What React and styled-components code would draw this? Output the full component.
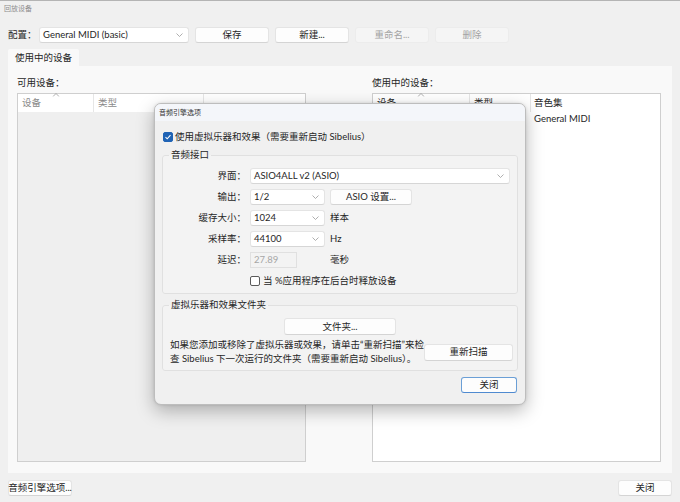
import React from "react"
import styled, { createGlobalStyle } from "styled-components"

const GlobalStyle = createGlobalStyle`
	html, body {
		margin: 0;
		padding: 0;
		background: #f0f0f0;
	}
	body {
		font-family: "Lato", "Noto Sans CJK SC", sans-serif;
		font-size: 9.5px;
		line-height: 12px;
		color: #262626;
	}
	* {
		box-sizing: border-box;
	}
`

function Chevron({ up }) {
	return (
		<svg width="7" height="4" viewBox="0 0 7 4">
			<path
				d={up ? "M0.5 3.5 L3.5 0.5 L6.5 3.5" : "M0.5 0.5 L3.5 3.5 L6.5 0.5"}
				fill="none"
				stroke="#9a9a9a"
				strokeWidth="0.8"
			/>
		</svg>
	)
}

function Select({ width, value }) {
	return (
		<SelectBox $width={width}>
			<span>{value}</span>
			<Chevron />
		</SelectBox>
	)
}

function Check({ checked }) {
	return (
		<CheckBox $checked={checked}>
			{checked && (
				<svg width="8" height="8" viewBox="0 0 8 8">
					<path d="M1.5 4.2 L3.2 5.8 L6.5 2.2" fill="none" stroke="#fff" strokeWidth="1.1" />
				</svg>
			)}
		</CheckBox>
	)
}

function App() {
	return (
		<>
			<GlobalStyle />
			<Window>
				<WindowTitle>回放设备</WindowTitle>
				<Toolbar>
					<FieldLabel>配置：</FieldLabel>
					<Select width={150} value="General MIDI (basic)" />
					<Button $width={74} $gap={6}>保存</Button>
					<Button $width={74} $gap={6}>新建...</Button>
					<Button $width={74} $gap={6} $disabled>重命名...</Button>
					<Button $width={74} $gap={6} $disabled>删除</Button>
				</Toolbar>

				<TabStrip>
					<Tab>使用中的设备</Tab>
				</TabStrip>
				<TabPanel>
					<Column>
						<ColumnLabel>可用设备：</ColumnLabel>
						<ListBox $dim>
							<ListHeader>
								<HeaderCell $width={76} $muted>
									设备
									<SortMark>
										<Chevron up />
									</SortMark>
								</HeaderCell>
								<HeaderCell $width={110} $muted>类型</HeaderCell>
							</ListHeader>
						</ListBox>
					</Column>
					<Column>
						<ColumnLabel>使用中的设备：</ColumnLabel>
						<ListBox>
							<ListHeader>
								<HeaderCell $width={97}>
									设备
									<SortMark>
										<Chevron up />
									</SortMark>
								</HeaderCell>
								<HeaderCell $width={61}>类型</HeaderCell>
								<HeaderCell $last>音色集</HeaderCell>
							</ListHeader>
							<ListRow>
								<Cell $width={97} />
								<Cell $width={61} />
								<Cell>General MIDI</Cell>
							</ListRow>
						</ListBox>
					</Column>
				</TabPanel>

				<BottomBar>
					<Button $width={64}>音频引擎选项...</Button>
					<Button $width={54}>关闭</Button>
				</BottomBar>

				<Dialog>
					<DialogTitle>音频引擎选项</DialogTitle>
					<DialogBody>
						<CheckRow>
							<Check checked />
							<span>使用虚拟乐器和效果（需要重新启动 Sibelius）</span>
						</CheckRow>

						<Group>
							<GroupTitle>音频接口</GroupTitle>
							<FormRow>
								<RowLabel>界面：</RowLabel>
								<Select width={260} value="ASIO4ALL v2 (ASIO)" />
							</FormRow>
							<FormRow>
								<RowLabel>输出：</RowLabel>
								<Select width={75} value="1/2" />
								<Button $width={82} $gap={5}>ASIO 设置...</Button>
							</FormRow>
							<FormRow>
								<RowLabel>缓存大小：</RowLabel>
								<Select width={75} value="1024" />
								<Unit>样本</Unit>
							</FormRow>
							<FormRow>
								<RowLabel>采样率：</RowLabel>
								<Select width={75} value="44100" />
								<Unit>Hz</Unit>
							</FormRow>
							<FormRow>
								<RowLabel>延迟：</RowLabel>
								<ReadOnlyField>27.89</ReadOnlyField>
								<Unit $offset={33}>毫秒</Unit>
							</FormRow>
							<FormRow>
								<RowLabel />
								<Check />
								<CheckText>当 %应用程序在后台时释放设备</CheckText>
							</FormRow>
						</Group>

						<Group $second>
							<GroupTitle>虚拟乐器和效果文件夹</GroupTitle>
							<FolderRow>
								<Button $width={112} $height={17}>文件夹...</Button>
							</FolderRow>
							<RescanRow>
								<Hint>
									如果您添加或移除了虚拟乐器或效果，请单击“重新扫描”来检
									<br />
									查 Sibelius 下一次运行的文件夹（需要重新启动 Sibelius）。
								</Hint>
								<Button $width={89} $height={17}>重新扫描</Button>
							</RescanRow>
						</Group>

						<DialogFooter>
							<Button $width={56} $primary>关闭</Button>
						</DialogFooter>
					</DialogBody>
				</Dialog>
			</Window>
		</>
	)
}

const Window = styled.div`
	position: relative;
	width: 680px;
	height: 502px;
	background: #f0f0f0;
	border-top: 1px solid #b4b4b4;
	display: flex;
	flex-direction: column;
	overflow: hidden;
`

const WindowTitle = styled.div`
	height: 26px;
	padding: 2px 0 0 4px;
	font-size: 7px;
	line-height: 10px;
	color: #8e8e8e;
`

const Toolbar = styled.div`
	display: flex;
	align-items: center;
	height: 16px;
	padding-left: 8px;
`

const FieldLabel = styled.span`
	width: 31px;
`

const SelectBox = styled.div`
	width: ${(p) => p.$width}px;
	height: 16px;
	flex-shrink: 0;
	background: #ffffff;
	border: 1px solid #e4e4e4;
	border-bottom-color: #d6d6d6;
	border-radius: 3px;
	display: flex;
	align-items: center;
	justify-content: space-between;
	padding: 0 5px 0 3px;
	white-space: nowrap;
`

const Button = styled.div`
	width: ${(p) => p.$width}px;
	height: ${(p) => p.$height || 16}px;
	margin-left: ${(p) => p.$gap || 0}px;
	flex-shrink: 0;
	display: flex;
	align-items: center;
	justify-content: center;
	white-space: nowrap;
	border-radius: 3px;
	background: ${(p) => (p.$disabled ? "#f5f5f5" : "#fdfdfd")};
	color: ${(p) => (p.$disabled ? "#a3a3a3" : "#262626")};
	border: 1px solid
		${(p) => (p.$primary ? "#6b9fd6" : p.$disabled ? "#ececec" : "#e4e4e4")};
	border-bottom-color: ${(p) =>
		p.$primary ? "#4f8ad0" : p.$disabled ? "#ececec" : "#d4d4d4"};
`

const TabStrip = styled.div`
	display: flex;
	margin-top: 6px;
	padding-left: 8px;
`

const Tab = styled.div`
	width: 71px;
	height: 17px;
	background: #f9f9f9;
	display: flex;
	align-items: center;
	justify-content: center;
	border-radius: 2px 2px 0 0;
`

const TabPanel = styled.div`
	margin: 0 8px;
	height: 407px;
	background: #f9f9f9;
	display: grid;
	grid-template-columns: 289px 289px;
	column-gap: 66px;
	padding: 11px 11px 11px 9px;
`

const Column = styled.div`
	display: flex;
	flex-direction: column;
	min-height: 0;
`

const ColumnLabel = styled.div`
	height: 12px;
	margin-bottom: 4px;
`

const ListBox = styled.div`
	flex: 1;
	background: ${(p) => (p.$dim ? "#efefef" : "#ffffff")};
	border: 1px solid #cfcfcf;
	display: flex;
	flex-direction: column;
`

const ListHeader = styled.div`
	display: flex;
	height: 18px;
	background: #ffffff;
`

const HeaderCell = styled.div`
	position: relative;
	width: ${(p) => (p.$width ? `${p.$width}px` : "auto")};
	flex: ${(p) => (p.$last ? 1 : "none")};
	padding-left: ${(p) => (p.$last ? 3 : 4)}px;
	display: flex;
	align-items: center;
	color: ${(p) => (p.$muted ? "#8a8a8a" : "#262626")};
	border-right: ${(p) => (p.$last ? "none" : "1px solid #e6e6e6")};
`

const SortMark = styled.span`
	position: absolute;
	top: -1px;
	left: 50%;
	transform: translateX(-50%);
	line-height: 0;
`

const ListRow = styled.div`
	display: flex;
	height: 14px;
	align-items: center;
`

const Cell = styled.div`
	width: ${(p) => (p.$width ? `${p.$width}px` : "auto")};
	flex: ${(p) => (p.$width ? "none" : 1)};
	padding-left: 3px;
	white-space: nowrap;
`

const BottomBar = styled.div`
	display: flex;
	justify-content: space-between;
	margin-top: 7px;
	padding: 0 8px;
`

const Dialog = styled.div`
	position: absolute;
	left: 154px;
	top: 102px;
	width: 372px;
	height: 302px;
	background: #f0f0f0;
	border: 1px solid #bdbdbd;
	border-radius: 7px;
	box-shadow: 0 6px 18px rgba(0, 0, 0, 0.28), 0 0 3px rgba(0, 0, 0, 0.12);
	overflow: hidden;
	display: flex;
	flex-direction: column;
`

const DialogTitle = styled.div`
	height: 17px;
	background: #f4f6fa;
	padding-left: 4px;
	font-size: 7px;
	line-height: 17px;
	color: #333;
`

const DialogBody = styled.div`
	padding: 10px 7px 0 7px;
	display: flex;
	flex-direction: column;
`

const CheckRow = styled.div`
	display: flex;
	align-items: center;
	height: 12px;
	gap: 2px;
	padding-left: 1px;
`

const CheckBox = styled.span`
	width: 10px;
	height: 10px;
	flex-shrink: 0;
	border-radius: 2px;
	display: flex;
	align-items: center;
	justify-content: center;
	background: ${(p) => (p.$checked ? "#1f63b5" : "#ffffff")};
	border: 1px solid ${(p) => (p.$checked ? "#1f63b5" : "#5a5a5a")};
`

const Group = styled.fieldset`
	margin: ${(p) => (p.$second ? "5px" : "6px")} 0 0 0;
	padding: 7px 6px 4px 6px;
	border: 1px solid #e0e0e0;
	border-radius: 3px;
	background: #f3f3f3;
	min-width: 0;
`

const GroupTitle = styled.legend`
	padding: 0 2px;
	height: 12px;
	line-height: 12px;
`

const FormRow = styled.div`
	display: flex;
	align-items: center;
	height: 16px;
	margin-bottom: 5px;

	&:last-child {
		margin-bottom: 0;
	}
`

const RowLabel = styled.span`
	width: 77px;
	margin-right: 4px;
	text-align: right;
	flex-shrink: 0;
`

const Unit = styled.span`
	margin-left: ${(p) => p.$offset || 5}px;
`

const ReadOnlyField = styled.div`
	width: 47px;
	height: 16px;
	flex-shrink: 0;
	background: #f3f3f3;
	border: 1px solid #e0e0e0;
	display: flex;
	align-items: center;
	padding-left: 3px;
	color: #a6a6a6;
`

const CheckText = styled.span`
	margin-left: 3px;
`

const FolderRow = styled.div`
	display: flex;
	justify-content: center;
`

const RescanRow = styled.div`
	display: flex;
	align-items: center;
	justify-content: space-between;
	margin-top: 3px;
`

const Hint = styled.div`
	padding-left: 1px;
	line-height: 14px;
	white-space: nowrap;
`

const DialogFooter = styled.div`
	display: flex;
	justify-content: flex-end;
	margin-top: 6px;
	padding-right: 1px;
`

export default App
